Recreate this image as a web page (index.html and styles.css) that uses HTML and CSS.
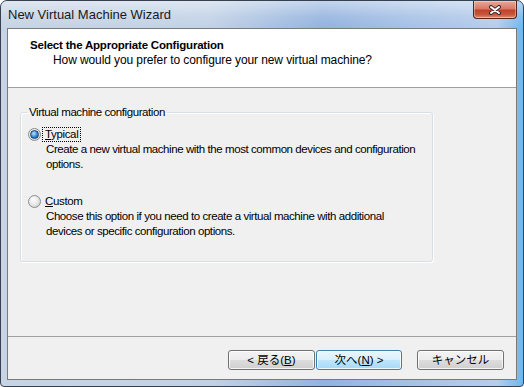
FILE: index.html
```html
<!DOCTYPE html>
<html lang="ja">
<head>
  <meta charset="UTF-8" />
  <title>New Virtual Machine Wizard</title>
  <link rel="stylesheet" href="styles.css">
</head>
<body>

  <div class="window">

    <!-- Title bar -->
    <div class="titlebar">
      <span class="title">New Virtual Machine Wizard</span>
      <button class="close">
        <svg width="14" height="10" viewBox="0 0 14 10">
          <path d="M3 2 L11 8 M11 2 L3 8" stroke="#3a2a2a" stroke-width="4" stroke-linecap="round"/>
          <path d="M3 2 L11 8 M11 2 L3 8" stroke="#ffffff" stroke-width="2" stroke-linecap="round"/>
        </svg>
      </button>
    </div>

    <div class="client">

      <div class="header">
        <h1>Select the Appropriate Configuration</h1>
        <p>How would you prefer to configure your new virtual machine?</p>
      </div>

      <div class="body">
        <fieldset class="group">
          <legend>Virtual machine configuration</legend>

          <div class="option first">
            <div class="option-head">
              <span class="radio checked"></span>
              <span class="label focus"><u>T</u>ypical</span>
            </div>
            <p class="desc">Create a new virtual machine with the most common devices and configuration<br>options.</p>
          </div>

          <div class="option">
            <div class="option-head">
              <span class="radio"></span>
              <span class="label"><u>C</u>ustom</span>
            </div>
            <p class="desc">Choose this option if you need to create a virtual machine with additional<br>devices or specific configuration options.</p>
          </div>
        </fieldset>
      </div>

      <div class="footer">
        <button class="btn">&lt; 戻る(<u>B</u>)</button>
        <button class="btn default">次へ(<u>N</u>) &gt;</button>
        <button class="btn cancel">キャンセル</button>
      </div>

    </div>
  </div>

</body>
</html>
```

FILE: styles.css
```css
* {
  box-sizing: border-box;
}
body {
  margin: 0;
  background: #ffffff;
  font-family: "Liberation Sans", Arial, "Noto Sans CJK JP", sans-serif;
  font-size: 11.5px;
  color: #000;
}
.window {
  width: 524px;
  height: 387px;
  display: flex;
  flex-direction: column;
  border: 1px solid #36404e;
  border-radius: 7px 7px 4px 4px;
  background: linear-gradient(to right, #c6d4e5 0%, #c2d2e6 40%, #93b3de 62%, #a6c1e6 78%, #b6cdeb 95%, #6fb6ee 100%);
  overflow: hidden;
}

/* title bar */
.titlebar {
  height: 27px;
  display: flex;
  justify-content: space-between;
  align-items: flex-start;
  background: linear-gradient(rgba(255,255,255,0.45), rgba(255,255,255,0.1) 60%, rgba(255,255,255,0));
}
.title {
  line-height: 27px;
  padding-left: 7px;
  font-size: 13px;
  color: #1a1a1a;
}
.close {
  width: 44px;
  height: 18px;
  margin-right: 6px;
  padding: 0;
  border: 1px solid #5a2219;
  border-top: none;
  border-radius: 0 0 4px 4px;
  background: linear-gradient(#eaa89a 0%, #d8796a 45%, #c2412c 55%, #c8553d 80%, #e0907a 100%);
  box-shadow: inset 0 0 0 1px rgba(255,255,255,0.35);
  display: flex;
  align-items: center;
  justify-content: center;
}

/* client area */
.client {
  flex: 1;
  margin: 0 6px 6px 6px;
  border: 1px solid #7a7a7a;
  background: #f0f0f0;
  display: flex;
  flex-direction: column;
}
.header {
  height: 59px;
  background: #ffffff;
  border-bottom: 1px solid #a0a0a0;
}
.header h1 {
  margin: 0;
  padding: 9px 0 0 22px;
  font-size: 11.5px;
  line-height: 14px;
  font-weight: bold;
  letter-spacing: -0.2px;
}
.header p {
  margin: 1px 0 0 0;
  padding-left: 45px;
  font-size: 12px;
  line-height: 14px;
  letter-spacing: -0.1px;
}
.body {
  flex: 1;
  padding: 17px 0 0 12px;
}
.group {
  width: 413px;
  height: 157px;
  margin: 0;
  padding: 0 0 0 6px;
  border: 1px solid #d5dfe5;
  border-radius: 3px;
  box-shadow: inset 1px 1px 0 #ffffff, 1px 1px 0 #ffffff;
}
.group legend {
  padding: 0 2px;
  line-height: 14px;
  letter-spacing: -0.42px;
}
.option {
  margin-top: 23px;
  margin-left: 1px;
}
.option.first {
  margin-top: 8px;
}
.option-head {
  display: flex;
  align-items: center;
  gap: 2px;
  height: 14px;
}
.label {
  padding: 0 2px;
  line-height: 13px;
  letter-spacing: -0.35px;
}
.focus {
  outline: 1px dotted #000;
}
.desc {
  margin: 1px 0 0 18px;
  line-height: 14.5px;
  white-space: nowrap;
  letter-spacing: -0.42px;
}

/* radio buttons */
.radio {
  width: 13px;
  height: 13px;
  border-radius: 50%;
  border: 1px solid #8c8c8c;
  background: radial-gradient(circle at 40% 35%, #ffffff 0%, #e4e4e4 55%, #c4c4c4 100%);
  display: flex;
  align-items: center;
  justify-content: center;
}
.radio.checked::after {
  content: "";
  width: 7px;
  height: 7px;
  border-radius: 50%;
  border: 1px solid #1b3f6e;
  background: radial-gradient(circle at 40% 35%, #bfe6ff 0%, #3b8fd9 50%, #0f4f96 100%);
}

/* footer buttons */
.footer {
  height: 43px;
  border-top: 1px solid #a0a0a0;
  display: flex;
  justify-content: flex-end;
  gap: 1px;
  padding: 13px 12px 0 0;
}
.btn {
  width: 87px;
  height: 20px;
  padding: 0;
  border: 1px solid #707070;
  border-radius: 3px;
  background: linear-gradient(#f3f3f3 0%, #ececec 50%, #dddddd 51%, #cfcfcf 100%);
  box-shadow: inset 0 0 0 1px rgba(255,255,255,0.8);
  font-family: "Liberation Sans", "Noto Sans CJK JP", sans-serif;
  font-size: 11.5px;
  line-height: 16px;
  color: #000;
}
.btn.default {
  width: 86px;
  border-color: #3c7fb1;
  background: linear-gradient(#eaf6fd 0%, #d9f0fc 50%, #bee6fd 51%, #a7d9f5 100%);
}
.btn.cancel {
  margin-left: 14px;
}
```
